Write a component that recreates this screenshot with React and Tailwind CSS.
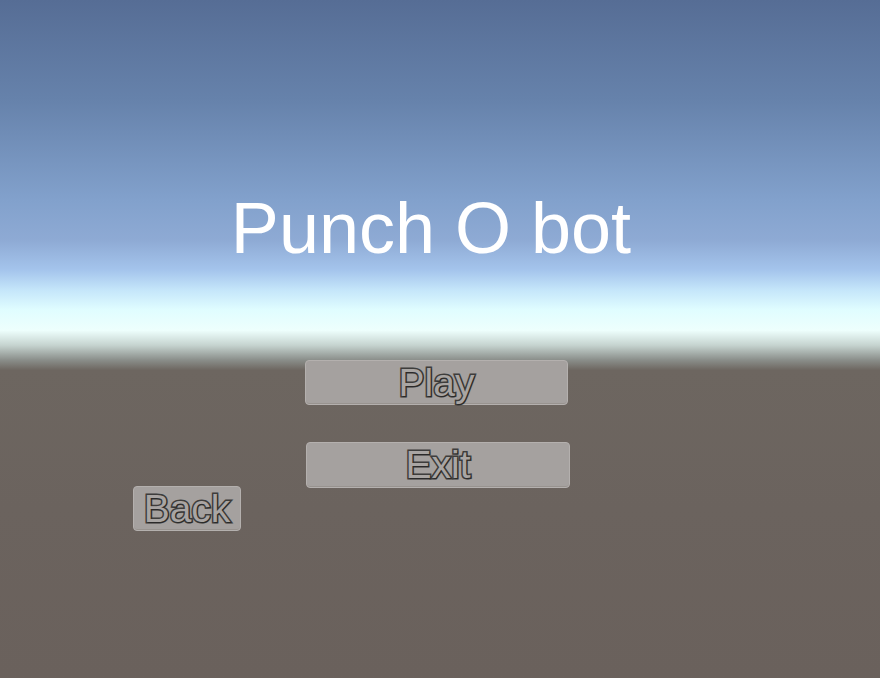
const MenuButton = ({ label, className = "" }) => (
  <button
    className={`flex items-center justify-center rounded-[4px] border border-[#b4b0ae] bg-[#a5a19f] shadow-[inset_0_-1px_0_#98938f] ${className}`}
  >
    <span className="text-[39px] leading-none text-[#a9a5a3] [-webkit-text-stroke:3px_#3e3d3c] [paint-order:stroke_fill] [text-shadow:1px_1px_1px_rgba(0,0,0,0.35)]">
      {label}
    </span>
  </button>
);

export default function App() {
  return (
    <div className="h-[678px] w-[880px] overflow-hidden font-['Liberation_Sans',Arial,sans-serif] bg-[linear-gradient(to_bottom,#566d95_0%,#6682ab_14.7%,#82a1cc_29.5%,#8eaad4_35.4%,#a4c4ec_39.8%,#c5e6fa_42.8%,#e0fdff_45.7%,#eefffd_48.7%,#c6d4d0_50.9%,#8a8e8a_53.1%,#6d6660_54.6%,#6b635e_75%,#6a615c_100%)]">
      {/* title */}
      <h1 className="pt-[192px] pr-[18px] text-center text-[72px] leading-none font-normal text-white">
        Punch O bot
      </h1>

      {/* main menu */}
      <div className="mt-[96px] flex flex-col">
        <MenuButton label="Play" className="ml-[305px] h-[45px] w-[263px] pb-[1px]" />
        <MenuButton label="Exit" className="ml-[306px] mt-[37px] h-[46px] w-[264px] pb-[1px]" />
        <MenuButton label="Back" className="ml-[133px] -mt-[2px] h-[45px] w-[108px] pb-[1px]" />
      </div>
    </div>
  );
}
